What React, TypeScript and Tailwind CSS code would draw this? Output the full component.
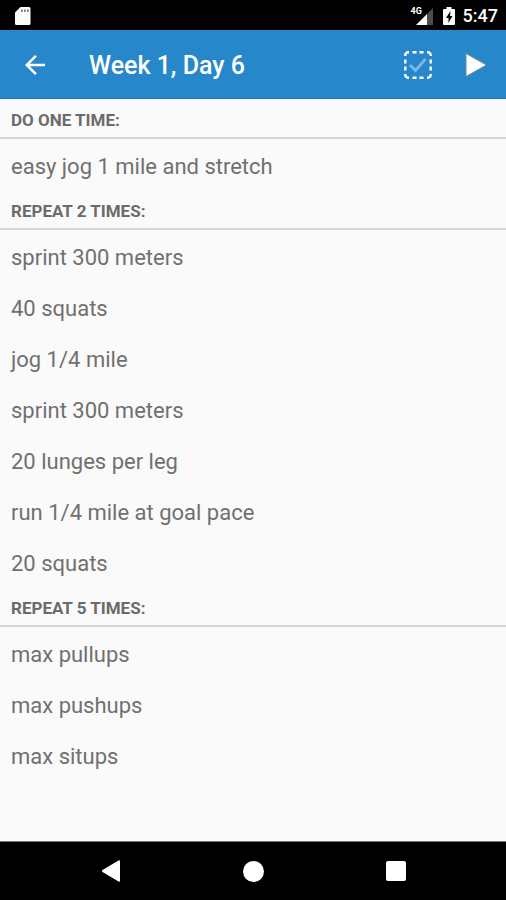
const sections = [
  { title: "Do one time:", items: ["easy jog 1 mile and stretch"] },
  {
    title: "Repeat 2 times:",
    items: [
      "sprint 300 meters",
      "40 squats",
      "jog 1/4 mile",
      "sprint 300 meters",
      "20 lunges per leg",
      "run 1/4 mile at goal pace",
      "20 squats",
    ],
  },
  {
    title: "Repeat 5 times:",
    items: ["max pullups", "max pushups", "max situps"],
  },
];

function StatusBar() {
  return (
    <div className="flex h-[30px] items-center justify-between bg-black pt-px pr-2 pl-3.5 text-white">
      <svg width="18" height="20" viewBox="0 0 18 20" aria-hidden="true">
        <path d="M6.500 1H15a1.500 1.500 0 0 1 1.500 1.500v15A1.500 1.500 0 0 1 15 19H2.500A1.500 1.500 0 0 1 1 17.500V6.500z" fill="#fff" />
        <path d="M7 3.500h1.600v2.500H7zM10 3.500h1.600v2.500H10zM13 3.500h1.600v2.500H13z" fill="#777" />
      </svg>
      <div className="flex items-center">
        <div className="relative h-5 w-6">
          <span className="absolute top-0 left-0 text-[9px] leading-[10px] font-bold">4G</span>
          <svg className="absolute inset-0" width="24" height="20" viewBox="0 0 24 20" aria-hidden="true">
            <path d="M22 2v17h-6V8z" fill="#4d4d4d" />
            <path d="M16 8v11H5z" fill="#fff" />
          </svg>
        </div>
        <svg className="ml-2" width="12" height="20" viewBox="0 0 12 20" aria-hidden="true">
          <path d="M3.500 1h5v2H11a1 1 0 0 1 1 1v14a1 1 0 0 1-1 1H1a1 1 0 0 1-1-1V4a1 1 0 0 1 1-1h2.500z" fill="#fff" />
          <path d="M7.500 5 3 12h2.500v5L9.500 10H7z" fill="#000" />
        </svg>
        <span className="ml-2 text-lg leading-5 font-medium">5:47</span>
      </div>
    </div>
  );
}

function Toolbar() {
  return (
    <header className="flex h-[69px] items-center border-b border-[#1f78b8] bg-[#2787cb] pt-0.5 pr-3 pl-[15px] text-white">
      <button type="button" aria-label="Back" className="flex h-10 w-10 items-center justify-center">
        <svg width="30" height="30" viewBox="0 0 24 24" fill="currentColor">
          <path d="M20 11H7.830l5.590-5.590L12 4l-8 8 8 8 1.410-1.410L7.830 13H20v-2z" />
        </svg>
      </button>
      <h1 className="ml-[34px] flex-1 pt-0.5 text-[25px] font-medium">Week 1, Day 6</h1>
      <button type="button" aria-label="Mark as done" className="flex h-10 w-10 items-center justify-center">
        <svg width="28" height="28" viewBox="0 0 28 28" fill="none" stroke="#fff">
          <path
            d="M1.300 5V4a2.700 2.700 0 0 1 2.700-2.700h1M8.500 1.300h4M15.500 1.300h4M23 1.300h1a2.700 2.700 0 0 1 2.700 2.700v1M26.700 8.500v4M26.700 15.500v4M26.700 23v1a2.700 2.700 0 0 1-2.700 2.700h-1M19.500 26.700h-4M12.500 26.700h-4M5 26.700H4A2.700 2.700 0 0 1 1.300 24v-1M1.300 19.500v-4M1.300 12.500v-4"
            strokeWidth="2.400"
          />
          <path d="m6 14 5.500 5.500L21.500 8" stroke="#7ab8e6" strokeWidth="2.800" />
        </svg>
      </button>
      <button type="button" aria-label="Start workout" className="ml-5 flex h-10 w-9 items-center justify-center">
        <svg width="24" height="26" viewBox="0 0 24 26">
          <path d="M2 1.500v23L22.500 13z" fill="#fff" stroke="#6f8797" strokeWidth="1" />
        </svg>
      </button>
    </header>
  );
}

function NavBar() {
  return (
    <nav className="flex h-[59px] items-center justify-between border-t border-[#777] bg-black px-[98px]">
      <button type="button" aria-label="Back" className="flex h-6 w-6 items-center justify-center">
        <svg width="24" height="24" viewBox="0 0 24 24" fill="#fff">
          <path d="M20.500 1.500a1 1 0 0 1 1.500.8v19.400a1 1 0 0 1-1.500.8L4.500 13a1.200 1.200 0 0 1 0-2z" />
        </svg>
      </button>
      <button type="button" aria-label="Home" className="h-[21px] w-[21px] rounded-full bg-white" />
      <button type="button" aria-label="Recent apps" className="flex h-6 w-6 items-center justify-center">
        <span className="h-5 w-5 rounded-xs bg-white" />
      </button>
    </nav>
  );
}

export default function App() {
  return (
    <div className="flex min-h-screen flex-col bg-[#fafafa] font-['Roboto',sans-serif]">
      <StatusBar />
      <Toolbar />
      <main className="flex-1">
        {sections.map((section) => (
          <section key={section.title}>
            <h2 className="flex h-10 items-center border-b-2 border-[#d6d6d6] px-[11px] pt-1.5 text-[17px] font-bold text-[#6b6b6b] uppercase">
              {section.title}
            </h2>
            <ul>
              {section.items.map((item, i) => (
                <li key={i} className="flex h-[51px] items-center px-[11px] pt-1 text-[22px] text-[#707070]">
                  {item}
                </li>
              ))}
            </ul>
          </section>
        ))}
      </main>
      <NavBar />
    </div>
  );
}
